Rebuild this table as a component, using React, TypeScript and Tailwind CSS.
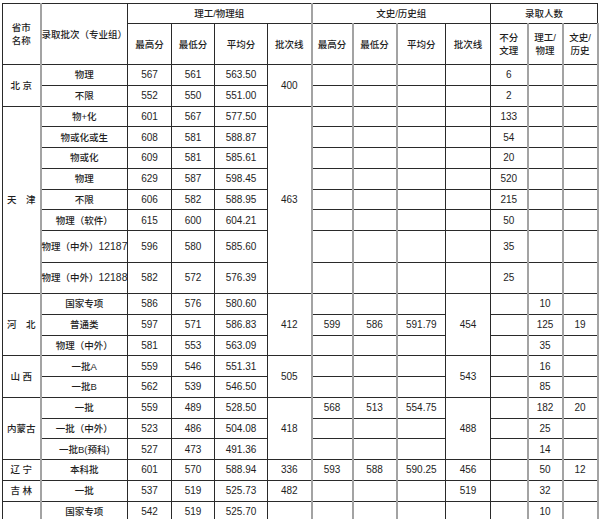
import React from "react";

type Cell = [number, React.ReactNode?, number?];

const widths = [38, 87, 44, 43, 53, 44, 41, 44, 49, 45, 37, 35, 35];
const grayLeft = [1, 6, 7, 8, 11, 12];

const rows: { h: string; cells: Cell[] }[] = [
  { h: "h-[20.75px]", cells: [[0, "北 京", 2], [1, "物理"], [2, "567"], [3, "561"], [4, "563.50"], [5, "400", 2], [6], [7], [8], [9], [10, "6"], [11], [12]] },
  { h: "h-[20.75px]", cells: [[1, "不限"], [2, "552"], [3, "550"], [4, "551.00"], [6], [7], [8], [9], [10, "2"], [11], [12]] },
  { h: "h-[20.75px]", cells: [[0, "天　津", 8], [1, "物+化"], [2, "601"], [3, "567"], [4, "577.50"], [5, "463", 8], [6], [7], [8], [9], [10, "133"], [11], [12]] },
  { h: "h-[20.75px]", cells: [[1, "物或化或生"], [2, "608"], [3, "581"], [4, "588.87"], [6], [7], [8], [9], [10, "54"], [11], [12]] },
  { h: "h-[20.75px]", cells: [[1, "物或化"], [2, "609"], [3, "581"], [4, "585.61"], [6], [7], [8], [9], [10, "20"], [11], [12]] },
  { h: "h-[20.75px]", cells: [[1, "物理"], [2, "629"], [3, "587"], [4, "598.45"], [6], [7], [8], [9], [10, "520"], [11], [12]] },
  { h: "h-[20.75px]", cells: [[1, "不限"], [2, "606"], [3, "582"], [4, "588.95"], [6], [7], [8], [9], [10, "215"], [11], [12]] },
  { h: "h-[20.75px]", cells: [[1, "物理（软件）"], [2, "615"], [3, "600"], [4, "604.21"], [6], [7], [8], [9], [10, "50"], [11], [12]] },
  { h: "h-[31.5px]", cells: [[1, <>物理（中外）<span className="text-[10.4px]">12187</span></>], [2, "596"], [3, "580"], [4, "585.60"], [6], [7], [8], [9], [10, "35"], [11], [12]] },
  { h: "h-[31.5px]", cells: [[1, <>物理（中外）<span className="text-[10.4px]">12188</span></>], [2, "582"], [3, "572"], [4, "576.39"], [6], [7], [8], [9], [10, "25"], [11], [12]] },
  { h: "h-[20.75px]", cells: [[0, "河　北", 3], [1, "国家专项"], [2, "586"], [3, "576"], [4, "580.60"], [5, "412", 3], [6], [7], [8], [9, "454", 3], [10], [11, "10"], [12]] },
  { h: "h-[20.75px]", cells: [[1, "普通类"], [2, "597"], [3, "571"], [4, "586.83"], [6, "599"], [7, "586"], [8, "591.79"], [10], [11, "125"], [12, "19"]] },
  { h: "h-[20.75px]", cells: [[1, "物理（中外）"], [2, "581"], [3, "553"], [4, "563.09"], [6], [7], [8], [10], [11, "35"], [12]] },
  { h: "h-[20.75px]", cells: [[0, "山 西", 2], [1, "一批A"], [2, "559"], [3, "546"], [4, "551.31"], [5, "505", 2], [6], [7], [8], [9, "543", 2], [10], [11, "16"], [12]] },
  { h: "h-[20.75px]", cells: [[1, "一批B"], [2, "562"], [3, "539"], [4, "546.50"], [6], [7], [8], [10], [11, "85"], [12]] },
  { h: "h-[20.75px]", cells: [[0, "内蒙古", 3], [1, "一批"], [2, "559"], [3, "489"], [4, "528.50"], [5, "418", 3], [6, "568"], [7, "513"], [8, "554.75"], [9, "488", 3], [10], [11, "182"], [12, "20"]] },
  { h: "h-[20.75px]", cells: [[1, "一批（中外）"], [2, "523"], [3, "486"], [4, "504.08"], [6], [7], [8], [10], [11, "25"], [12]] },
  { h: "h-[20.75px]", cells: [[1, "一批B(预科)"], [2, "527"], [3, "473"], [4, "491.36"], [6], [7], [8], [10], [11, "14"], [12]] },
  { h: "h-[20.75px]", cells: [[0, "辽 宁"], [1, "本科批"], [2, "601"], [3, "570"], [4, "588.94"], [5, "336"], [6, "593"], [7, "588"], [8, "590.25"], [9, "456"], [10], [11, "50"], [12, "12"]] },
  { h: "h-[20.75px]", cells: [[0, "吉 林"], [1, "一批"], [2, "537"], [3, "519"], [4, "525.73"], [5, "482"], [6], [7], [8], [9, "519"], [10], [11, "32"], [12]] },
  { h: "h-[20.75px]", cells: [[0, "", 2], [1, "国家专项"], [2, "542"], [3, "519"], [4, "525.70"], [5, "", 2], [6], [7], [8], [9], [10], [11, "10"], [12]] },
];

function cellClass(col: number) {
  let c = "border border-[#2a2a2a] text-center align-middle p-0 leading-[13px]";
  if (grayLeft.includes(col)) c += " border-l-2 border-l-[#a3a3a3]";
  if (col === 12) c += " border-r-2 border-r-[#a3a3a3]";
  return c;
}

function C({ col, rs, cs, children, extra = "" }: { col: number; rs?: number; cs?: number; children?: React.ReactNode; extra?: string }) {
  return (
    <td rowSpan={rs} colSpan={cs} className={cellClass(col) + " " + extra}>
      {children}
    </td>
  );
}

export default function App() {
  return (
    <div className="w-[600px] h-[519px] overflow-hidden bg-white pt-[3px] pl-[2px] text-[#1e1e1e] font-medium font-['Liberation_Sans','Noto_Sans_CJK_SC',sans-serif]">
      <table className="table-fixed border-collapse w-[596px] text-[10px]">
        <colgroup>
          {widths.map((w, i) => (
            <col key={i} style={{ width: w }} />
          ))}
        </colgroup>
        <tbody>
          <tr className="h-[20px]">
            <C col={0} rs={2} extra="text-[9.5px]">
              省市
              <br />
              名称
            </C>
            <C col={1} rs={2} extra="text-[9.5px] text-left whitespace-nowrap">
              录取批次（专业组）
            </C>
            <C col={2} cs={4} extra="text-[9.5px]">理工/物理组</C>
            <C col={6} cs={4} extra="text-[9.5px]">文史/历史组</C>
            <C col={10} cs={3} extra="text-[9.5px]">录取人数</C>
          </tr>
          <tr className="h-[41px]">
            <C col={2} extra="text-[9.5px]">最高分</C>
            <C col={3} extra="text-[9.5px]">最低分</C>
            <C col={4} extra="text-[9.5px]">平均分</C>
            <C col={5} extra="text-[9.5px]">批次线</C>
            <C col={6} extra="text-[9.5px]">最高分</C>
            <C col={7} extra="text-[9.5px]">最低分</C>
            <C col={8} extra="text-[9.5px]">平均分</C>
            <C col={9} extra="text-[9.5px]">批次线</C>
            <C col={10} extra="text-[9.5px]">
              不分
              <br />
              文理
            </C>
            <C col={11} extra="text-[9.5px]">
              理工/
              <br />
              物理
            </C>
            <C col={12} extra="text-[9.5px]">
              文史/
              <br />
              历史
            </C>
          </tr>
          {rows.map((r, i) => (
            <tr key={i} className={r.h}>
              {r.cells.map(([col, t, rs]) => (
                <C key={col} col={col} rs={rs} extra={col <= 1 ? "text-[9.5px] whitespace-nowrap" : ""}>
                  {t}
                </C>
              ))}
            </tr>
          ))}
        </tbody>
      </table>
    </div>
  );
}
